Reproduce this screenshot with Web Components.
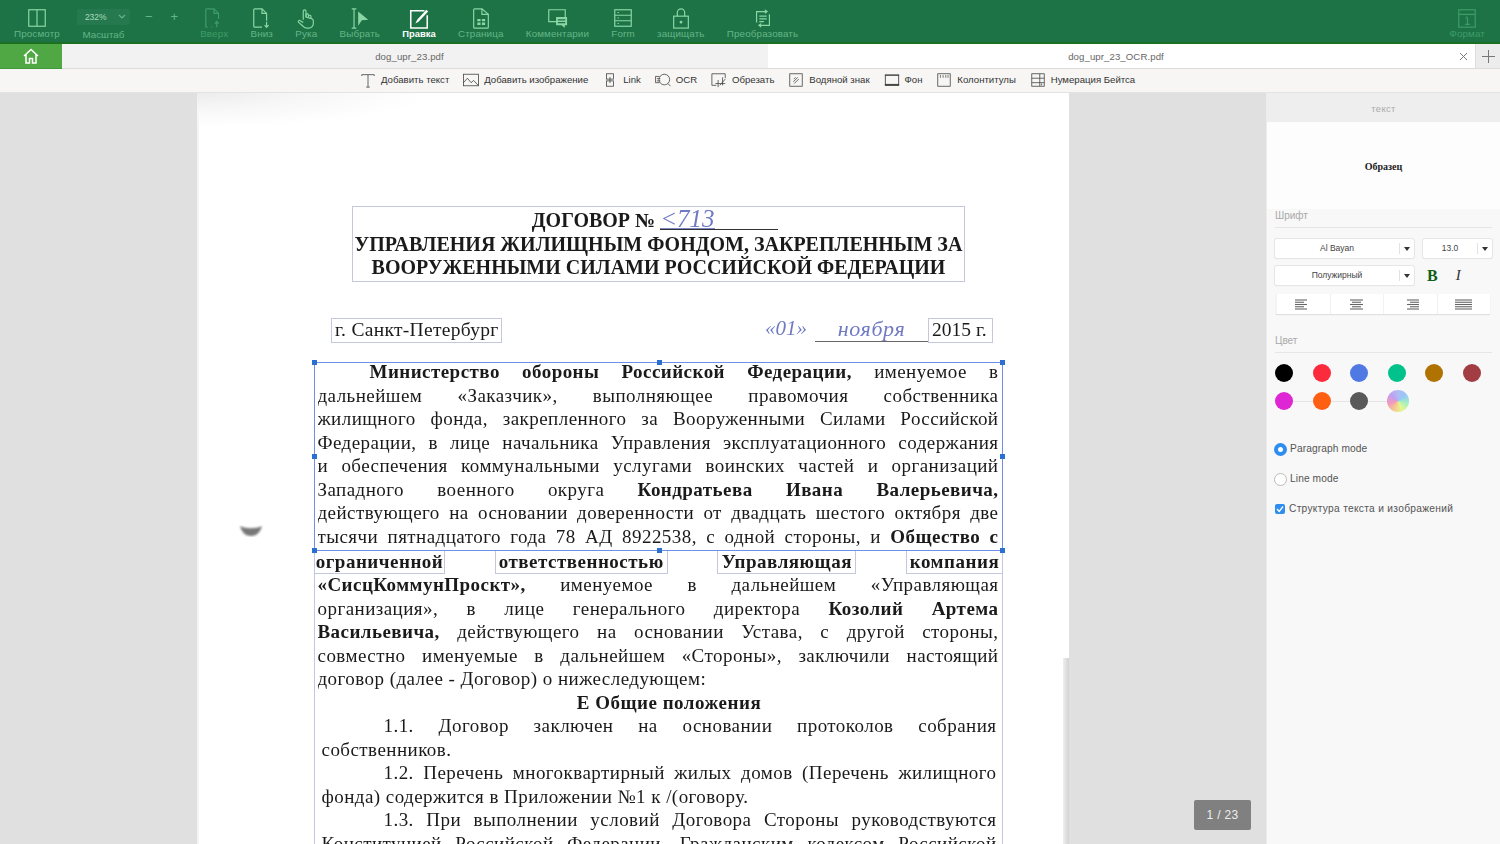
<!DOCTYPE html>
<html lang="ru"><head><meta charset="utf-8"><title>PDF</title>
<style>
html,body{margin:0;height:100%;overflow:hidden;background:#e0e0e0}
body{font-family:"Liberation Sans",sans-serif}
</style></head><body>
<pdf-app>
  <app-toolbar slot="top">
    <tool-btn icon="view" label="Просмотр"></tool-btn>
    <zoom-ctl></zoom-ctl>
    <tool-btn icon="up" label="Вверх" state="off"></tool-btn>
    <tool-btn icon="down" label="Вниз"></tool-btn>
    <tool-btn icon="hand" label="Рука"></tool-btn>
    <tool-btn icon="select" label="Выбрать"></tool-btn>
    <tool-btn icon="edit" label="Правка" state="on"></tool-btn>
    <tool-btn icon="page" label="Страница"></tool-btn>
    <tool-btn icon="comment" label="Комментарии"></tool-btn>
    <tool-btn icon="form" label="Form"></tool-btn>
    <tool-btn icon="lock" label="защищать"></tool-btn>
    <tool-btn icon="convert" label="Преобразовать"></tool-btn>
    <tool-btn icon="format" label="Формат" state="off" class="end"></tool-btn>
  </app-toolbar>
  <tab-bar slot="top"></tab-bar>
  <edit-bar slot="top">
    <edit-item icon="text">Добавить текст</edit-item>
    <edit-item icon="image">Добавить изображение</edit-item>
    <edit-item icon="link">Link</edit-item>
    <edit-item icon="ocr">OCR</edit-item>
    <edit-item icon="crop">Обрезать</edit-item>
    <edit-item icon="mark">Водяной знак</edit-item>
    <edit-item icon="bg">Фон</edit-item>
    <edit-item icon="head">Колонтитулы</edit-item>
    <edit-item icon="num">Нумерация Бейтса</edit-item>
  </edit-bar>
  <doc-view slot="main">
    <doc-page>
      <title-box>
        <b style="margin-right:7px">ДОГОВОР № <hand-note width="118">&lt;713</hand-note></b>
        <b>УПРАВЛЕНИЯ ЖИЛИЩНЫМ ФОНДОМ, ЗАКРЕПЛЕННЫМ ЗА</b>
        <b>ВООРУЖЕННЫМИ СИЛАМИ РОССИЙСКОЙ ФЕДЕРАЦИИ</b>
      </title-box>
      <place-row></place-row>
      <text-block selected>
        <doc-line indent="52"><b>Министерство обороны Российской Федерации,</b> именуемое в</doc-line>
        <doc-line>дальнейшем «Заказчик», выполняющее правомочия собственника</doc-line>
        <doc-line>жилищного фонда, закрепленного за Вооруженными Силами Российской</doc-line>
        <doc-line>Федерации, в лице начальника Управления эксплуатационного содержания</doc-line>
        <doc-line>и обеспечения коммунальными услугами воинских частей и организаций</doc-line>
        <doc-line>Западного военного округа <b>Кондратьева Ивана Валерьевича,</b></doc-line>
        <doc-line>действующего на основании доверенности от двадцать шестого октября две</doc-line>
        <doc-line>тысячи пятнадцатого года 78 АД 8922538, с одной стороны, и <b>Общество с</b></doc-line>
      </text-block>
      <word-row>
        <word-box style="width:131px"><b>ограниченной</b></word-box>
        <word-box style="width:173px"><b>ответственностью</b></word-box>
        <word-box style="width:139px"><b>Управляющая</b></word-box>
        <word-box style="width:97px"><b>компания</b></word-box>
      </word-row>
      <text-block>
        <doc-line><b>«СисцКоммунПроскт»,</b> именуемое в дальнейшем «Управляющая</doc-line>
        <doc-line>организация», в лице генерального директора <b>Козолий Артема</b></doc-line>
        <doc-line><b>Васильевича,</b> действующего на основании Устава, с другой стороны,</doc-line>
        <doc-line>совместно именуемые в дальнейшем «Стороны», заключили настоящий</doc-line>
        <doc-line mode="plain">договор (далее - Договор) о нижеследующем:</doc-line>
        <doc-line mode="center"><b>Е Общие положения</b></doc-line>
        <doc-line indent="62" inset>1.1. Договор заключен на основании протоколов собрания</doc-line>
        <doc-line mode="plain" inset>собственников.</doc-line>
        <doc-line indent="62" inset>1.2. Перечень многоквартирный жилых домов (Перечень жилищного</doc-line>
        <doc-line mode="plain" inset>фонда) содержится в Приложении №1 к /(оговору.</doc-line>
        <doc-line indent="62" inset>1.3. При выполнении условий Договора Стороны руководствуются</doc-line>
        <doc-line inset>Конституцией Российской Федерации, Гражданским кодексом Российской</doc-line>
      </text-block>
    </doc-page>
  </doc-view>
  <side-panel slot="main"></side-panel>
</pdf-app>
<script>
const ICONS={
view:'<rect x="3" y="3" width="18" height="18"/><path d="M12 3v18"/>',
up:'<path d="M5 22H4a1 1 0 0 1-1-1V3a1 1 0 0 1 1-1h8l5 5v6"/><path d="M12 2v5h5"/><path d="M9 22h1M15 22v-6M12.8 18.2l2.2-2.4 2.2 2.4" />',
down:'<path d="M12 22H4a1 1 0 0 1-1-1V3a1 1 0 0 1 1-1h8l5 5v8"/><path d="M12 2v5h5"/><path d="M17 16v6M14.8 19.8l2.2 2.4 2.2-2.4"/>',
hand:'<path d="M9 14V4.6a1.5 1.5 0 0 1 3 0V11l6 1.6c1.2.4 2 1.4 2 2.6V18c0 2.5-2 5-5 5h-2c-2 0-3.500-.8-4.600-2.300L3.800 16.500c-.8-1.200.8-2.600 2-1.600L9 17"/><path d="M12 11V8.500a1.400 1.400 0 0 1 2.700 0V11.500M14.700 10a1.400 1.400 0 0 1 2.700 0v2"/>',
select:'<path d="M3 2h5M3 23h5M5.500 2v21"/><path d="M10 5l11 9-7 .5-4 6z" fill="currentColor" stroke="none"/>',
edit:'<path d="M18 4H3v19h18V9" stroke-width="1.700"/><path d="M8 18l2-4L20 3l2 2L11.500 16z" fill="currentColor" stroke="none"/>',
page:'<path d="M13 2H5a1 1 0 0 0-1 1v19a1 1 0 0 0 1 1h14a1 1 0 0 0 1-1V8z"/><path d="M13 2v6h7"/><path d="M8 13h3.500v2.500H8zM13 13h3.500v2.500H13zM8 17h3.500v2.500H8zM13 17h3.500v2.500H13z" fill="currentColor" stroke="none"/>',
comment:'<path d="M17 16H3V3h18v8"/><path d="M11 11h12v9h-2.500v3l-3.500-3h-6z" fill="currentColor" stroke="none"/><path d="M13 14h8M13 17h8" stroke="#1d7346"/>',
form:'<rect x="3" y="3" width="18" height="18"/><path d="M3 9h18M3 15h18M6 6h1.500M6 12h1.500M6 18h1.500"/>',
lock:'<rect x="4" y="10" width="16" height="13"/><path d="M8 10V6a4 4 0 0 1 8 0v4"/><circle cx="12" cy="16.500" r=".9" fill="currentColor"/>',
convert:'<path d="M5 17V5h11M19 8v12H8"/><path d="M14 2.500L17.500 5 14 7.500zM10 17.500L6.500 20l3.500 2.500z" fill="currentColor" stroke="none"/><path d="M8 10h8M8 13h8M8 16h5"/>',
format:'<rect x="3" y="3" width="18" height="19"/><path d="M3 8h18M10 12h2.500v7M10 19h5"/><path d="M12 9.500v1"/>',
text:'<path d="M2 3h14M9 3v14M7 17h4M2 3v1.500M16 3v1.500" stroke-width=".9"/>',
image:'<rect x=".5" y="2.500" width="17" height="13" stroke-width=".9"/><path d="M.5 12L5 7l4 5 3-2.500 5.500 6" stroke-width=".9"/>',
link:'<rect x="5" y="2" width="8" height="6" stroke-width=".9"/><rect x="5" y="10" width="8" height="6" stroke-width=".9"/><path d="M9 5.500v7" stroke-width=".9"/>',
ocr:'<path d="M5 5H.5v7H5" stroke-width=".9"/><circle cx="10.500" cy="8.500" r="6" stroke-width=".9"/><path d="M14.500 13l3 3" stroke-width=".9"/><path d="M2 7.500h4M2 10h4" stroke-width=".9"/>',
crop:'<path d="M6 15H1V2h15v5" stroke-width=".9"/><path d="M8 9v8M5 13h11M13 6v9M10 15l6-7" stroke-width=".9"/>',
mark:'<rect x="2" y="2" width="14" height="14" stroke-width=".9"/><path d="M6 11l5-5M7 13l5-5M6.500 8l2-2" stroke-width=".9"/>',
bg:'<rect x="1.500" y="3.500" width="15" height="11" stroke-width="1"/><path d="M1 14.500h16" stroke-width="2.200"/><path d="M1 3.500h16" stroke-width="1.200"/>',
head:'<rect x="2" y="2" width="14" height="14" stroke-width=".9"/><path d="M5 3.500v3M8 3.500v3M11 3.500v3M13.500 3.500v3" stroke-width=".8"/>',
num:'<rect x="2" y="2" width="14" height="14" stroke-width=".9"/><path d="M2 7h14M2 12h14M11 2v14M13 13v2" stroke-width=".9"/>'
};
const def=(n,html)=>{customElements.define(n,class extends HTMLElement{
  constructor(){super();this.attachShadow({mode:'open'}).innerHTML=typeof html==='function'?'':html}
  connectedCallback(){if(typeof html==='function')this.shadowRoot.innerHTML=html(this);}
})};
def('pdf-app',`<style>:host{display:flex;flex-direction:column;width:1500px;height:844px;overflow:hidden}
.main{flex:1;display:flex;min-height:0}</style><slot name="top"></slot><div class="main"><slot name="main"></slot></div>`);
def('app-toolbar',`<style>:host{display:flex;height:42px;padding:0 15px 0 14px;gap:22.300px;background:#1d7346;border-bottom:2px solid #1b6f20;box-sizing:content-box}
::slotted(.end){margin-left:auto}</style><slot></slot>`);
def('tool-btn',h=>`<style>:host{display:flex;flex-direction:column;align-items:center;color:#8ad6a4;font:9.800px/12px "Liberation Sans",sans-serif;letter-spacing:.14px;padding-top:7px;box-sizing:border-box;height:42px}
:host([state=off]){color:#3d9c68}
:host([state=on]){color:#fff}
svg{width:22px;height:22px;fill:none;stroke:currentColor;stroke-width:1.300;margin-bottom:-2px;display:block}
span{color:#65b586;white-space:nowrap;margin-top:.5px}
:host([state=off]) span{color:#3d9c68}
:host([state=on]) span{color:#fff;font-weight:bold;font-size:9.400px;letter-spacing:0}</style>
<svg viewBox="0 0 24 24">${ICONS[h.getAttribute('icon')]}</svg><span>${h.getAttribute('label')}</span>`);
def('zoom-ctl',`<style>:host{display:flex;flex-direction:column;align-items:center;position:relative;width:53px;font:9.800px/12px "Liberation Sans",sans-serif;color:#65b586;padding-top:9px;margin:0 48px 0 -5.300px;box-sizing:border-box;height:42px}
.box{width:53px;height:16px;background:#26794e;border-radius:2px;color:#a9dcbc;font-size:8.500px;line-height:16px;display:flex;align-items:center;justify-content:space-between;padding:0 4px 0 8px;box-sizing:border-box;margin-bottom:4px}
.box svg{width:8px;height:6px}
.pm{position:absolute;left:68px;top:11px;display:flex;gap:18px;color:#65b586;font-size:13px;white-space:nowrap}</style>
<div class="box"><span>232%</span><svg viewBox="0 0 8 6" fill="none" stroke="#65b586" stroke-width="1.200"><path d="M1 1l3 3 3-3"/></svg></div><span>Масштаб</span><div class="pm"><span>−</span><span>+</span></div>`);
def('tab-bar',`<style>:host{display:flex;height:24px;background:#f2f2f2;border-bottom:1px solid #dcdcdc;font:9.600px/26px "Liberation Sans",sans-serif;color:#666;letter-spacing:.1px}
.home{width:62px;background:#50a845;border-bottom:1px solid #3f9a3c;margin-bottom:-1px;display:flex;align-items:center;justify-content:center}
.t{flex:0 0 706px;text-align:center;box-sizing:border-box;padding-right:11px}
.a{flex:0 0 707px;box-sizing:border-box;background:#fff;position:relative;text-align:center;padding-right:11px}
.x{position:absolute;right:7px;top:8px;width:9px;height:9px}
.p{flex:1;display:flex;align-items:center;justify-content:center;background:#ececec;border-left:1px solid #ddd}</style>
<div class="home"><svg width="16" height="16" viewBox="0 0 16 16" fill="none" stroke="#fff" stroke-width="1.500"><path d="M1 8l7-6.500L15 8M3 6.500V15h3.500v-4.500h3V15H13V6.500"/></svg></div>
<div class="t">dog_upr_23.pdf</div>
<div class="a">dog_upr_23_OCR.pdf<svg class="x" viewBox="0 0 9 9" stroke="#777" stroke-width="1"><path d="M1 1l7 7M8 1l-7 7"/></svg></div>
<div class="p"><svg width="13" height="13" viewBox="0 0 13 13" stroke="#777" stroke-width="1"><path d="M6.500 0v13M0 6.500h13"/></svg></div>`);
def('edit-bar',`<style>:host{display:flex;height:22px;padding:0 0 1px 360px;gap:13.900px;background:#f7f6f5;border-bottom:1px solid #e3e3e3;align-items:center;box-sizing:content-box}</style><slot></slot>`);
def('edit-item',h=>`<style>:host{display:flex;align-items:center;gap:5px;font:9.620px/12px "Liberation Sans",sans-serif;color:#333;white-space:nowrap}
svg{width:16px;height:16px;fill:none;stroke:#444;display:block}</style>
<svg viewBox="0 0 18 18">${ICONS[h.getAttribute('icon')]}</svg><slot></slot>`);
def('doc-view',`<style>:host{display:block;position:relative;width:1266px;background:#e0e0e0;padding-left:197px;box-sizing:border-box;overflow:hidden}
.n{position:absolute;right:15px;bottom:14px;width:57px;height:30px;border-radius:2px;background:#808080;color:#eee;font:12px/30px "Liberation Sans",sans-serif;text-align:center;letter-spacing:.3px}</style><slot></slot><div class="n">1 / 23</div>`);
def('doc-page',`<style>:host{display:block;position:relative;width:872px;height:751px;background:#fff;padding-top:113px;box-sizing:border-box;overflow:hidden;color:#1a1a1a;font-family:"Liberation Serif",serif;filter:blur(.3px)}
.scan{position:absolute;left:0;top:0;width:220px;height:32px;background:radial-gradient(ellipse at 0 0,#ececec 0,#f7f7f7 35%,rgba(255,255,255,0) 75%)}
.edge{position:absolute;right:0;top:565px;bottom:0;width:6px;background:linear-gradient(90deg,#efefef,#d2d2d2)}
svg{position:absolute;left:40px;top:430px}
.b{position:absolute;left:0;top:0;bottom:0;width:2px;background:#f4f4f4}</style>
<div class="b"></div><div class="scan"></div><div class="edge"></div>
<svg width="28" height="20" viewBox="0 0 28 20"><defs><filter id="f"><feGaussianBlur stdDeviation=".8"/></filter></defs><path d="M3 3c6 3 16 3 22 0c-2 7-6 10-11 10S5 10 3 3z" fill="#777" filter="url(#f)"/></svg>
<slot></slot>`);
def('title-box',`<style>:host{display:flex;flex-direction:column;align-items:center;width:613px;height:76px;margin-left:155px;border:1px solid #c3c8dc;box-sizing:border-box;padding-top:2px;font-size:20px;line-height:23.500px;white-space:nowrap}</style><slot></slot>`);
def('hand-note',h=>`<style>:host{display:inline-block;width:${h.getAttribute('width')}px;border-bottom:1.500px solid #333;font-style:italic;font-weight:normal;font-size:25px;line-height:19px;color:#7079c4;box-sizing:border-box;vertical-align:baseline}
span{border-bottom:1.500px solid #7f88c9;display:inline-block}</style><span><slot></slot></span>`);
def('place-row',`<style>:host{display:block;position:relative;height:25px;margin-top:36px;margin-left:134px;width:662px;font-size:19.500px;line-height:21px}
.row{display:flex;align-items:flex-start;justify-content:space-between}
.bx{border:1px solid #c3c8dc;height:25px;padding:0 3px;box-sizing:border-box;white-space:nowrap;letter-spacing:.3px}
.l{width:171px}.y{width:65px;letter-spacing:0}
.r{display:flex;align-items:flex-start}
.d{font-style:italic;color:#6f79c4;font-size:21px;white-space:nowrap;margin-right:2px}
.u{display:inline-block;width:113px;border-bottom:1.500px solid #666;text-align:center;height:23px;color:#6f79c4;font-style:italic;font-size:22px;margin-left:6px;letter-spacing:.6px}</style>
<div class="row"><div class="bx l">г. Санкт-Петербург</div><div class="r"><div class="d">«01»</div><div class="u">ноября</div><div class="bx y">2015 г.</div></div></div>`);
def('text-block',h=>`<style>:host{display:block;position:relative;width:689px;margin-left:117px;border:1px solid #c3c8dc;border-top:0;box-sizing:border-box;padding:0 3.500px 0 2.500px}
:host([selected]){height:189px;margin-top:19px;border:1.500px solid #6f8fe8;padding-top:0}
:host([selected]) ::slotted(doc-line:first-child){margin-top:-2px}
i{position:absolute;width:5px;height:5px;background:#2b6fd0}
.tl{left:-3px;top:-3px}.tm{left:342px;top:-3px}.tr{right:-3px;top:-3px}.ml{left:-3px;top:91px}.mr{right:-3px;top:91px}.bl{left:-3px;bottom:-3px}.bm{left:342px;bottom:-3px}.br{right:-3px;bottom:-3px}</style>
<slot></slot>${h.hasAttribute('selected')?'<i class="tl"></i><i class="tm"></i><i class="tr"></i><i class="ml"></i><i class="mr"></i><i class="bl"></i><i class="bm"></i><i class="br"></i>':''}`);
def('doc-line',h=>`<style>:host{display:block;height:23.500px;font-size:19px;line-height:21.500px;text-align:justify;text-align-last:justify;overflow:hidden;padding-left:${h.getAttribute('indent')||0}px;box-sizing:border-box;letter-spacing:.45px}
:host([mode=plain]){text-align-last:left}
:host([mode=center]){text-align-last:center;letter-spacing:.5px;padding-left:22px}
:host([inset]){margin:0 2px 0 4px}</style><slot></slot>`);
def('word-row',`<style>:host{display:flex;justify-content:space-between;width:689px;margin-left:117px;height:23px;margin-top:0}</style><slot></slot>`);
def('word-box',`<style>:host{display:block;height:23px;border:1px solid #c3c8dc;border-top:0;box-sizing:border-box;font-size:19px;line-height:22px;text-align:center;letter-spacing:.5px;white-space:nowrap}</style><slot></slot>`);
def('panel-select',h=>`<style>:host{display:flex;height:19px;background:#fff;border-radius:2px;box-shadow:0 0 0 1px #e6e6e6,0 1px 1px #ddd;font:8.500px/19px "Liberation Sans",sans-serif;color:#444;align-items:center}
span{flex:1;text-align:center}
u{width:14px;border-left:1px solid #e2e2e2;height:11px;position:relative;flex:none}
u:after{content:"";position:absolute;left:4px;top:3.500px;border:3px solid transparent;border-top:4px solid #333;border-bottom:0}</style><span>${h.getAttribute('value')}</span><u></u>`);
const colors=['#000','#fb2a3c','#5079e3','#00c28a','#b07200','#a23e43','#df26d4','#ff5f12','#595959'];
const aligns=[[[0,12],[0,9],[0,12],[0,9],[0,12]],[[2,15],[4,13],[2,15],[4,13],[2,15]],[[5,17],[8,17],[5,17],[8,17],[5,17]],[[0,17],[0,17],[0,17],[0,17],[0,17]]];
def('side-panel',`<style>:host{display:block;width:234px;background:#f8f8f8;border-left:1px solid #ececec;box-sizing:border-box;font:10px/12px "Liberation Sans",sans-serif;color:#444;overflow:hidden}
.hd{height:29px;background:#eee;color:#aaa;font-size:9.500px;line-height:31px;text-align:center;letter-spacing:.3px}
.sm{height:87px;text-align:center;font:bold 10px/90px "Liberation Serif",serif;color:#222;background:#fdfdfd}
.in{padding:0 8px}
.lbl{color:#a9a9a9;height:19px;line-height:15px;font-size:10px;border-bottom:1px solid #e6e6e6;margin-top:-1px}
.grid{display:grid;grid-template-columns:139px 69px;column-gap:9px;margin-top:11px;row-gap:8px}
.fx{display:flex;align-items:center}
.bt{font:bold 16px/19px "Liberation Serif",serif;color:#0e5f17;margin-left:4px}
.it{font:italic 15px/19px "Liberation Serif",serif;color:#333;margin-left:18px}
.al{display:grid;grid-template-columns:repeat(4,1fr);width:214px;height:20px;margin:9px 0 0 1px;background:#fff;box-shadow:0 1px 1px #e0e0e0}
.al div{display:flex;align-items:center;justify-content:center;border-left:1px solid #f2f2f2}
.al svg{width:17px;height:11px;stroke:#666;stroke-width:1.100;fill:none}
.c{margin-top:19px}
.sw{display:grid;grid-template-columns:repeat(6,19px);column-gap:18.500px;margin-top:11px;height:19px}
.sw b{width:18px;height:18px;border-radius:50%;display:block}
.sw2{margin-top:9px;background:linear-gradient(#e4e4e4,#e4e4e4) no-repeat 9px 9px/113px 1px}
.sw b.wh{width:22px;height:22px;margin:-2px 0 0 -1px;background:conic-gradient(#b0bcf5,#98c8f8,#a2f0c0,#e4f790,#f8c890,#f098c0,#c0a0f0,#b0bcf5)}
.opt{display:flex;align-items:center;gap:3px;height:14px;font-size:10.200px;color:#555;letter-spacing:.1px;white-space:nowrap;margin-left:-1px}
.r{width:13px;height:13px;border-radius:50%;box-sizing:border-box;background:#fff;border:1px solid #bbb}
.r.on{border:4px solid #2d8df0}
.k{width:10px;height:10px;border-radius:2px;background:#2d8df0;display:flex;margin:0 1px}
.k svg{width:10px;height:10px}
.o1{margin-top:31px}.o2{margin-top:16px}.o3{margin-top:16px;letter-spacing:.3px}</style>
<div class="hd">текст</div><div class="sm">Образец</div>
<div class="in"><div class="lbl">Шрифт</div>
<div class="grid"><panel-select value="Al Bayan"></panel-select><panel-select value="13.0"></panel-select><panel-select value="Полужирный"></panel-select><div class="fx"><span class="bt">B</span><span class="it">I</span></div></div>
<div class="al">${aligns.map(a=>'<div><svg viewBox="0 0 17 11">'+a.map((s,i)=>`<path d="M${s[0]} ${1+i*2.25}H${s[1]}"/>`).join('')+'</svg></div>').join('')}</div>
<div class="lbl c">Цвет</div>
<div class="sw">${colors.slice(0,6).map(c=>`<b style="background:${c}"></b>`).join('')}</div>
<div class="sw sw2">${colors.slice(6).map(c=>`<b style="background:${c}"></b>`).join('')}<b class="wh"></b></div>
<div class="opt o1"><span class="r on"></span>Paragraph mode</div>
<div class="opt o2"><span class="r"></span>Line mode</div>
<div class="opt o3"><span class="k"><svg viewBox="0 0 10 10" fill="none" stroke="#fff" stroke-width="1.400"><path d="M2 5l2.200 2.500L8 2.500"/></svg></span>Структура текста и изображений</div>
</div>`);
</script>
</body></html>
